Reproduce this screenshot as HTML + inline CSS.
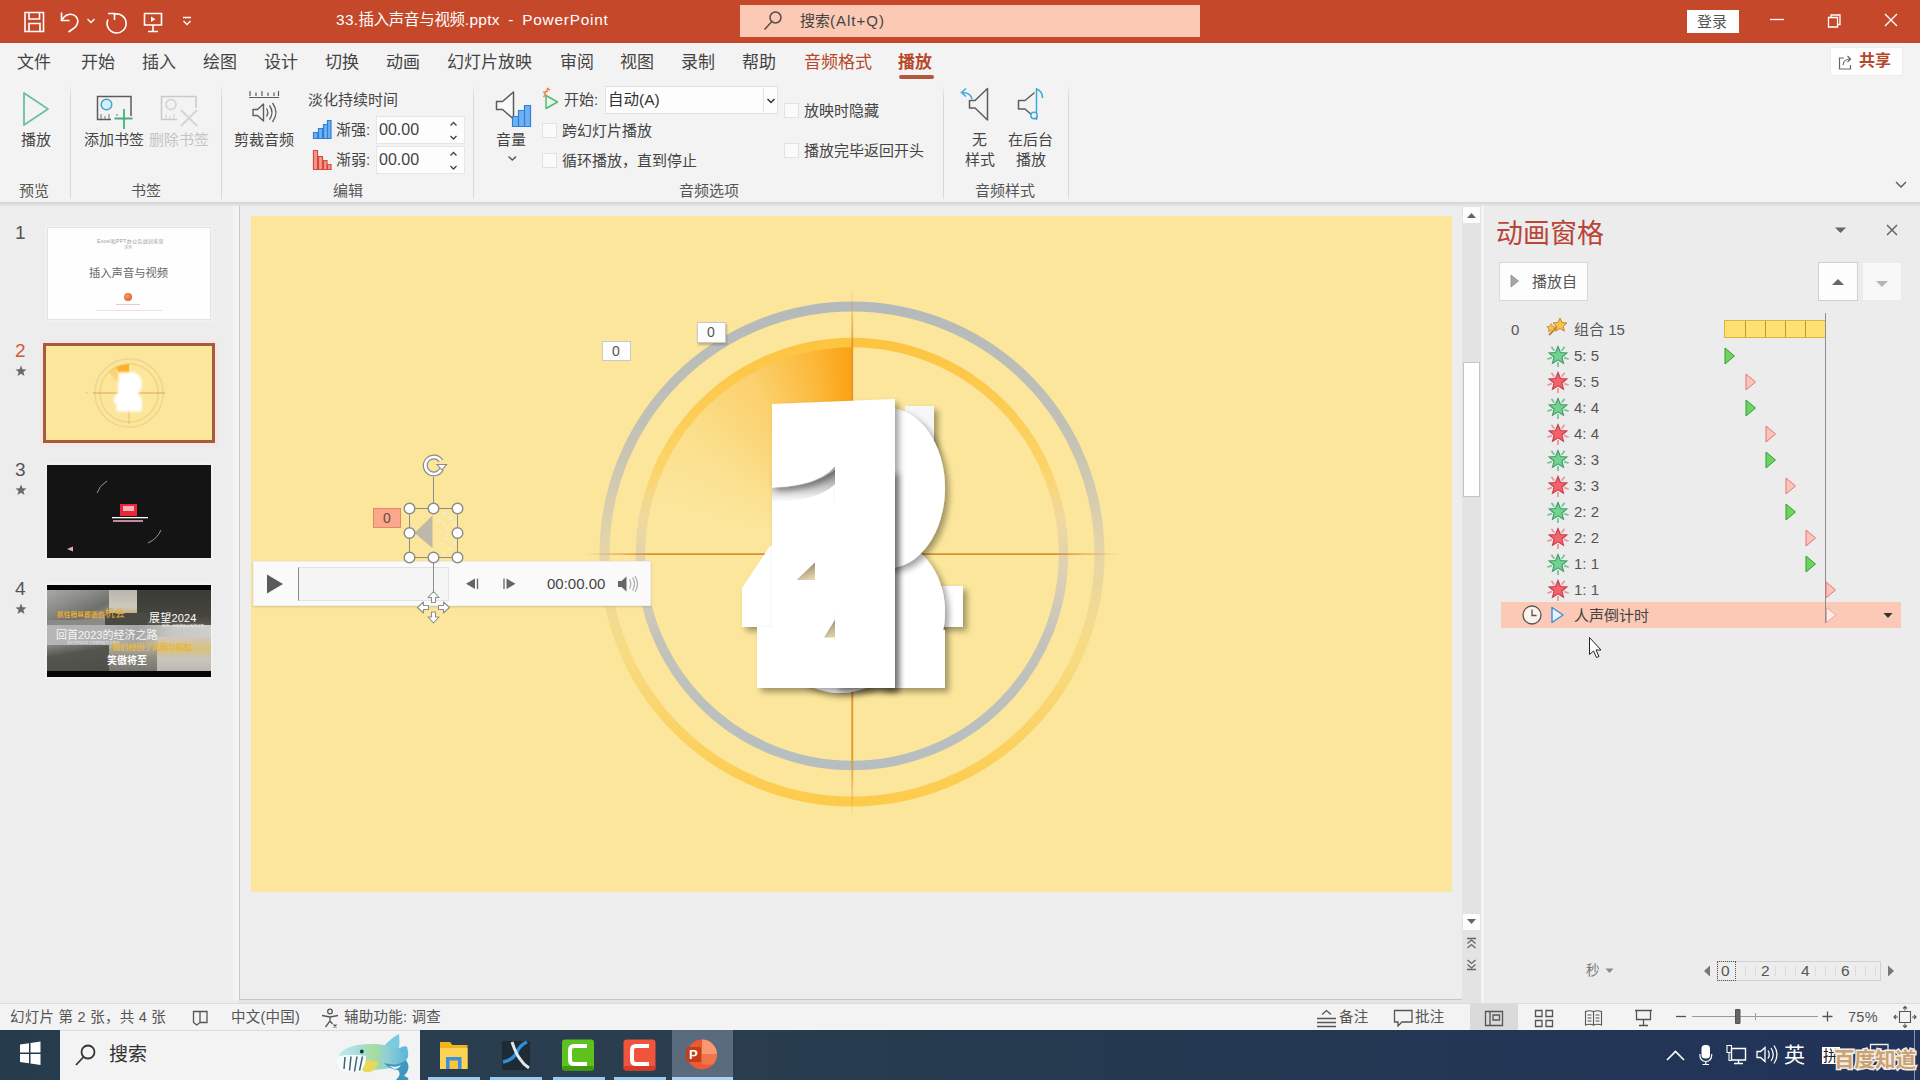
<!DOCTYPE html>
<html lang="zh-CN">
<head>
<meta charset="utf-8">
<title>33.插入声音与视频.pptx - PowerPoint</title>
<style>
*{box-sizing:border-box;margin:0;padding:0}
html,body{width:1920px;height:1080px;overflow:hidden;background:#e4e4e4}
body{font-family:"Liberation Sans","Noto Sans CJK SC",sans-serif;color:#444;position:relative;font-size:15px}
.abs{position:absolute}
.t{position:absolute;white-space:nowrap;line-height:1}
svg{position:absolute;overflow:visible}
/* title bar */
#titlebar{left:0;top:0;width:1920px;height:43px;background:#c5482a}
#search{left:740px;top:5px;width:460px;height:32px;background:#fbc9b4}
#tabs{left:0;top:43px;width:1920px;height:40px;background:#f3f3f3}
#ribbon{left:0;top:83px;width:1920px;height:119px;background:#f3f3f3}
#ribshadow{left:0;top:202px;width:1920px;height:4px;background:linear-gradient(#d4d4d4,#e6e6e6)}
.tab{font-size:17px;color:#444;top:54px}
.rl{font-size:15px;color:#444}
.grp{font-size:15px;color:#555;top:183px}
.sep{position:absolute;top:84px;width:1px;height:115px;background:linear-gradient(#f3f3f3,#d9d9d9 12%,#d9d9d9)}
.cb{position:absolute;width:15px;height:15px;background:#fafafa;border:1px solid #e2e2e2}
/* left pane */
#leftpane{left:0;top:206px;width:238px;height:797px;background:#ededed}
#divider{left:233px;top:206px;width:7px;height:794px;background:#f3f3f3;border-right:1px solid #c9c9c9}
#work{left:240px;top:206px;width:1222px;height:794px;background:#ededed;border-bottom:1px solid #c6c6c6}
#slide{left:251px;top:216px;width:1201px;height:676px;background:#fbe69b;overflow:hidden}
.num{font-size:19px;color:#555}
/* anim pane */
#apane{left:1484px;top:206px;width:436px;height:797px;background:#ececec}
.ai{font-size:15px;color:#555}
/* status */
#status{left:0;top:1003px;width:1920px;height:27px;background:#f3f3f3;border-top:1px solid #dcdcdc}
.st{font-size:14.5px;color:#555;top:1010px;letter-spacing:0.250px}
#taskbar{left:0;top:1030px;width:1920px;height:50px;background:#22334f}
</style>
</head>
<body>
<!-- TITLEBAR -->
<div id="titlebar" class="abs"></div>
<div id="search" class="abs"></div>
<div class="t" style="left:336px;top:11.500px;font-size:15.400px;color:#fff;letter-spacing:0.350px">33.<span style="letter-spacing:-0.200px">插入声音与视频</span>.pptx <span style="padding:0 3.800px">-</span> <span style="letter-spacing:0.750px">PowerPoint</span></div>
<div class="t" style="left:800px;top:13px;font-size:15px;color:#444">搜索<span style="letter-spacing:1px">(Alt+Q)</span></div>
<div class="abs" style="left:1687px;top:10px;width:52px;height:23px;background:#fff"></div>
<div class="t" style="left:1697px;top:14px;font-size:15px;color:#555">登录</div>
<svg style="left:0;top:0" width="1920" height="43" fill="none" stroke="#fff" stroke-width="1.6">
<!-- save -->
<path d="M25 12.5h18.500v19h-18.500z M29 12.500v6.500h10.500v-6.500 M29 31.500v-8h11v8" />
<!-- undo -->
<path d="M61.500 12.500v8h8 M62 20c3-6 10-7.500 14-3.500c3.500 4 1.500 9.500-2.500 12l-5 3.500" />
<path d="M87.500 19l3.500 3.500l3.500-3.500" stroke-width="1.400"/>
<!-- redo -->
<path d="M108 13.500h6.500v6.500 M113.500 14.500a9.500 9.500 0 1 1 -5.500 5" />
<!-- present -->
<path d="M144.500 13.500h17v11.500h-17z M153 25v6 M148 31.500h10" />
<path d="M151 16.500v5.500l4.500-2.750z" fill="#fff" stroke="none"/>
<!-- qat caret -->
<path d="M183 17.500h8 M183.500 21l3.500 3.500l3.500-3.500" stroke-width="1.400"/>
<!-- search glass -->
<circle cx="775.500" cy="17.500" r="5.500" stroke="#5a4a44" stroke-width="1.500"/>
<path d="M771.500 22l-7 7.500" stroke="#5a4a44" stroke-width="1.500"/>
<!-- window ctrls -->
<path d="M1770 19.500h14" stroke-width="1.300"/>
<path d="M1828.500 17.500h9v9.500h-9z M1831 17.500v-2.500h9v9.500h-2.500" stroke-width="1.300"/>
<path d="M1885 14l12 12 M1897 14l-12 12" stroke-width="1.400"/>
</svg>
<!-- TABS -->
<div id="tabs" class="abs"></div>
<div id="ribbon" class="abs"></div>
<div id="ribshadow" class="abs"></div>
<div class="t tab" style="left:17px">文件</div>
<div class="t tab" style="left:81px">开始</div>
<div class="t tab" style="left:142px">插入</div>
<div class="t tab" style="left:203px">绘图</div>
<div class="t tab" style="left:264px">设计</div>
<div class="t tab" style="left:325px">切换</div>
<div class="t tab" style="left:386px">动画</div>
<div class="t tab" style="left:447px">幻灯片放映</div>
<div class="t tab" style="left:560px">审阅</div>
<div class="t tab" style="left:620px">视图</div>
<div class="t tab" style="left:681px">录制</div>
<div class="t tab" style="left:742px">帮助</div>
<div class="t tab" style="left:804px;color:#b7472a">音频格式</div>
<div class="t tab" style="left:898px;color:#b7472a;font-weight:bold">播放</div>
<div class="abs" style="left:899px;top:75px;width:35px;height:4px;background:#b5573a;border-radius:2px"></div>
<div class="abs" style="left:1830px;top:47px;width:73px;height:29px;background:#fff;border:1px solid #ececec;border-radius:2px"></div>
<div class="t" style="left:1859px;top:53px;font-size:16px;font-weight:bold;color:#b7472a">共享</div>
<svg style="left:1837px;top:53px" width="18" height="18" fill="none" stroke="#666" stroke-width="1.200"><path d="M7 5h-4.500v11h11v-4 M6 12c0.500-4 3-6 7-6 M10.500 3l3 3l-3 3"/></svg>
<svg style="left:1894px;top:180px" width="14" height="10" fill="none" stroke="#555" stroke-width="1.300"><path d="M2 2l5 5l5-5"/></svg>


<div class="sep" style="left:70px"></div><div class="sep" style="left:221px"></div><div class="sep" style="left:473px"></div><div class="sep" style="left:943px"></div><div class="sep" style="left:1068px"></div>
<!-- play -->
<svg style="left:0;top:83px" width="1100" height="120" fill="none">
<path d="M24 10v32l24-16z" stroke="#6cc09c" stroke-width="1.800" stroke-linejoin="round"/>
<!-- add bookmark -->
<path d="M97.500 13.500h33.500v23h-33.500z" stroke="#5c5c5c" stroke-width="1.500"/>
<circle cx="106.500" cy="21.500" r="5.300" stroke="#4aa3c7" stroke-width="1.500" fill="#d4f0fb"/>
<path d="M101 36v-5 M105 36v-3 M109 36v-5 M113 36v-3 M117 36v-5 M121 36v-3" stroke="#777" stroke-width="1"/>
<path d="M111 33h26v12h-26z" fill="#f3f3f3" stroke="none"/>
<path d="M124 26v20 M114.500 35.500h18" stroke="#45b07c" stroke-width="1.800"/>
<!-- remove bookmark (disabled) -->
<path d="M161.500 13.500h34.500v23h-34.500z" stroke="#c9c9c9" stroke-width="1.500"/>
<circle cx="171" cy="21.500" r="5" stroke="#d2d2d2" stroke-width="1.500"/>
<path d="M166 36v-5 M170 36v-3 M174 36v-5 M178 36v-3" stroke="#d0d0d0" stroke-width="1"/>
<path d="M177 25h22v20h-22z" fill="#f3f3f3" stroke="none"/>
<path d="M181 27l16 16 M197 27l-16 16" stroke="#d4d4d4" stroke-width="1.800"/>
<!-- trim audio -->
<path d="M249 14.500h30 M250 8v5 M256 9.500v3.500 M262 8v5 M268 9.500v3.500 M274 9.500v3.500 M278.500 8v5" stroke="#5c5c5c" stroke-width="1.200"/>
<path d="M253 26.500h4.500l6-5.500v17l-6-5.500h-4.500z" stroke="#5c5c5c" stroke-width="1.400" stroke-linejoin="round"/>
<path d="M266.500 25.500q2.500 4 0 8 M269.500 22.500q5 7 0 14 M272.500 20q7 9.500 0 19" stroke="#5c5c5c" stroke-width="1.300"/>
<!-- fade in -->
<g stroke="#2f7fd6" stroke-width="1.200" fill="#6fb2f2"><path d="M313.500 49.500h4v6h-4z M318.500 45.500h4v10h-4z M323.500 41.500h4v14h-4z M327.500 37.500h3.500v18h-3.500z"/></g>
<!-- fade out -->
<g stroke="#d8493c" stroke-width="1.200" fill="#f39a8c"><path d="M313.500 67.500h4v19h-4z M318.500 73.500h4v13h-4z M323.500 77.500h3.500v9h-3.500z M327.500 81.500h3.500v5h-3.500z"/></g>
<!-- volume -->
<path d="M496.500 18.500h6l11-9.500v27l-11-9.500h-6z" stroke="#5c5c5c" stroke-width="1.500" fill="#fafafa" stroke-linejoin="round"/>
<g stroke="#2f7fd6" stroke-width="1.200" fill="#6fb2f2"><path d="M512.500 33.500h6v10h-6z M518.500 27.500h6v16h-6z M524.500 22.500h6v21h-6z"/></g>
<path d="M508.500 73.500l3.800 3.500l3.800-3.500" stroke="#555" stroke-width="1.400"/>
<!-- start icon -->
<path d="M546 12.500v13l11.500-6.500z" stroke="#58b87c" stroke-width="1.500" fill="#eaf7e6" stroke-linejoin="round"/>
<path d="M543.500 14l2-2.500l-1.500-2.500l3-0.500l0.500-3l2.500 1.500" stroke="#f08a3c" stroke-width="1.600"/>
<!-- no style -->
<path d="M969.500 17.500h5.500l12.500-12v31.500l-12.500-12h-5.500z" stroke="#5c5c5c" stroke-width="1.500" stroke-linejoin="round"/>
<path d="M972 16c-1-4.500-4.500-6.500-10-6.500 M966 5.500l-4.500 4l4.500 4" stroke="#3fa9dc" stroke-width="1.500"/>
<!-- bg play -->
<path d="M1018.500 17.500h6.500l11.500-9.500v28l-11.500-10h-6.500z" stroke="#5c5c5c" stroke-width="1.500" stroke-linejoin="round"/>
<path d="M1036.500 5v27" stroke="#f3f3f3" stroke-width="4"/>
<path d="M1036.500 5v25 M1036.500 6q6 2 6 9" stroke="#3fa9dc" stroke-width="1.500"/>
<circle cx="1034" cy="32.500" r="3.200" stroke="#3fa9dc" stroke-width="1.500" fill="#f3f3f3"/>
</svg>
<div class="t rl" style="left:21px;top:132px">播放</div>
<div class="t rl" style="left:84px;top:132px">添加书签</div>
<div class="t rl" style="left:149px;top:132px;color:#c4c4c4">删除书签</div>
<div class="t rl" style="left:234px;top:132px">剪裁音频</div>
<div class="t rl" style="left:308px;top:92px">淡化持续时间</div>
<div class="t rl" style="left:336px;top:122px">渐强:</div>
<div class="t rl" style="left:336px;top:152px">渐弱:</div>
<div class="abs" style="left:376px;top:116px;width:89px;height:28px;background:#fdfdfd;border:1px solid #e6e6e6"></div>
<div class="abs" style="left:376px;top:146px;width:89px;height:28px;background:#fdfdfd;border:1px solid #e6e6e6"></div>
<div class="t" style="left:379px;top:122px;font-size:16px;color:#444">00.00</div>
<div class="t" style="left:379px;top:152px;font-size:16px;color:#444">00.00</div>
<svg style="left:448px;top:118px" width="12" height="56" fill="none" stroke="#444" stroke-width="1.300"><path d="M2.500 7.500l3-3l3 3 M2.500 18l3 3l3-3 M2.500 37.500l3-3l3 3 M2.500 48l3 3l3-3"/></svg>
<div class="t rl" style="left:496px;top:132px">音量</div>
<div class="t rl" style="left:564px;top:92px">开始:</div>
<div class="abs" style="left:605px;top:86px;width:173px;height:28px;background:#fdfdfd;border:1px solid #e2e2e2"></div>
<div class="abs" style="left:763px;top:88px;width:1px;height:24px;background:#e4e4e4"></div>
<div class="t" style="left:608px;top:92px;font-size:15.500px;color:#333">自动(A)</div>
<svg style="left:765px;top:96px" width="12" height="10" fill="none" stroke="#333" stroke-width="1.500"><path d="M2.500 3l3.500 3.500l3.500-3.500"/></svg>
<div class="cb" style="left:542px;top:123px"></div>
<div class="cb" style="left:542px;top:153px"></div>
<div class="cb" style="left:784px;top:103px"></div>
<div class="cb" style="left:784px;top:143px"></div>
<div class="t rl" style="left:562px;top:123px">跨幻灯片播放</div>
<div class="t rl" style="left:562px;top:153px">循环播放，直到停止</div>
<div class="t rl" style="left:804px;top:103px">放映时隐藏</div>
<div class="t rl" style="left:804px;top:143px">播放完毕返回开头</div>
<div class="t rl" style="left:972px;top:132px">无</div>
<div class="t rl" style="left:965px;top:152px">样式</div>
<div class="t rl" style="left:1008px;top:132px">在后台</div>
<div class="t rl" style="left:1016px;top:152px">播放</div>
<div class="t grp" style="left:19px">预览</div>
<div class="t grp" style="left:131px">书签</div>
<div class="t grp" style="left:333px">编辑</div>
<div class="t grp" style="left:679px">音频选项</div>
<div class="t grp" style="left:975px">音频样式</div>

<!-- LEFT PANE -->
<div id="leftpane" class="abs"></div>
<div id="divider" class="abs"></div>
<div id="work" class="abs"></div>

<div class="t num" style="left:15px;top:223px">1</div>
<div class="t num" style="left:15px;top:341px;color:#d4573a">2</div>
<div class="t num" style="left:15px;top:460px">3</div>
<div class="t num" style="left:15px;top:579px">4</div>
<svg style="left:15px;top:365px" width="12" height="12" viewBox="0 0 12 12"><path d="M6 0.500l1.500 3.800l4 0.200l-3.100 2.600l1.100 4l-3.500-2.300l-3.500 2.300l1.100-4l-3.100-2.600l4-0.200z" fill="#6a6a6a"/></svg><svg style="left:15px;top:484px" width="12" height="12" viewBox="0 0 12 12"><path d="M6 0.500l1.500 3.800l4 0.200l-3.100 2.600l1.100 4l-3.500-2.300l-3.500 2.300l1.100-4l-3.100-2.600l4-0.200z" fill="#6a6a6a"/></svg><svg style="left:15px;top:603px" width="12" height="12" viewBox="0 0 12 12"><path d="M6 0.500l1.500 3.800l4 0.200l-3.100 2.600l1.100 4l-3.500-2.300l-3.500 2.300l1.100-4l-3.100-2.600l4-0.200z" fill="#6a6a6a"/></svg>
<div class="abs" style="left:45px;top:225px;width:168px;height:97px;background:#f1f1f1"></div>
<div class="abs" style="left:47px;top:227px;width:164px;height:93px;background:#fefefe;border:1px solid #e2e2e2"></div>
<div class="t" style="left:97px;top:239px;font-size:5px;color:#999;letter-spacing:0.300px">Excel和PPT办公实战训练营</div>
<div class="t" style="left:124px;top:246px;font-size:4px;color:#aaa">讲师</div>
<div class="t" style="left:89px;top:268px;font-size:11.300px;color:#666">插入声音与视频</div>
<div class="abs" style="left:124px;top:293px;width:8px;height:8px;border-radius:50%;background:radial-gradient(circle at 40% 40%,#f6a05a,#e2452f)"></div>
<div class="abs" style="left:116px;top:304px;width:24px;height:1px;background:#e9c9c0"></div>
<div class="abs" style="left:96px;top:310px;width:66px;height:1px;background:#e4e4e4"></div>

<div class="abs" style="left:40px;top:340px;width:178px;height:106px;background:#f5e3df;opacity:0.600"></div>
<div class="abs" style="left:43px;top:343px;width:172px;height:100px;background:#fbe69b;border:3px solid #a85a3c;overflow:hidden">
<svg style="left:0;top:0" width="166" height="94" viewBox="251 216 1201 676">
<circle cx="852" cy="554" r="247" fill="none" stroke="#ecd794" stroke-width="12"/>
<circle cx="852" cy="554" r="211" fill="none" stroke="#f2d684" stroke-width="12"/>
<path d="M852 346A208 208 0 0 0 760 368L852 554z" fill="#fbb22a"/>
<path d="M852 346A208 208 0 0 0 705 407L852 554z" fill="#fbb22a" opacity="0.350"/>
<path d="M590 554h524" stroke="#d9a850" stroke-width="8"/>
<path d="M852 420v360" stroke="#e6c46a" stroke-width="8"/>
<g filter="url(#tb)"><path d="M775 404h120v284h-135v-60h-18v-40l30-40z M895 412q50 10 50 75q0 50-30 75q30 20 30 50v75h-50z" fill="#fff"/></g>
<circle cx="545" cy="553" r="8" fill="#e8d07a"/>
<defs><filter id="tb" x="-30%" y="-30%" width="160%" height="160%"><feGaussianBlur stdDeviation="9"/></filter></defs>
</svg></div>

<div class="abs" style="left:45px;top:463px;width:168px;height:97px;background:#f1f1f1"></div>
<div class="abs" style="left:47px;top:465px;width:164px;height:93px;background:#141414;overflow:hidden">
<svg style="left:0;top:0" width="164" height="93" fill="none">
<path d="M50 28q2-7 10-12" stroke="#9a9a9a" stroke-width="1"/><path d="M101 78q9-4 13-13" stroke="#9a9a9a" stroke-width="1"/>
<rect x="73" y="39" width="17" height="12" fill="#e8283a"/>
<rect x="76" y="41" width="11" height="5" fill="#f7b0b4"/>
<rect x="65" y="52" width="36" height="1.300" fill="#fff"/>
<rect x="66" y="55" width="30" height="2" fill="#c88a98"/>
<path d="M26 81.500l-6 2.500l6 2.500z" fill="#e8a8b4"/>
</svg></div>

<div class="abs" style="left:45px;top:583px;width:168px;height:96px;background:#f1f1f1"></div>
<div class="abs" style="left:47px;top:585px;width:164px;height:92px;background:#050505;overflow:hidden">
<div class="abs" style="left:0;top:5px;width:164px;height:81px;background:#8b8b86"></div>
<div class="abs" style="left:0;top:5px;width:62px;height:30px;background:linear-gradient(155deg,#a9a8a4 0%,#8a8a86 40%,#6e6e6a 70%,#9b9b97 100%)"></div>
<div class="abs" style="left:62px;top:5px;width:30px;height:28px;background:linear-gradient(180deg,#b9b6ae,#cfc9bd 60%,#b7a25a)"></div>
<div class="abs" style="left:90px;top:5px;width:74px;height:36px;background:linear-gradient(180deg,#3c3c36,#45453e 70%,#5a5a54)"></div>
<div class="abs" style="left:58px;top:28px;width:42px;height:14px;background:#4a4a45"></div>
<div class="abs" style="left:0;top:40px;width:164px;height:22px;background:linear-gradient(90deg,#b6b6b6 0%,#b0b0b0 35%,#a5a5a5 55%,#c6c6c2 75%,#cfcfcb 100%)"></div>
<div class="abs" style="left:0;top:60px;width:62px;height:26px;background:linear-gradient(170deg,#8a8a84 0%,#55554f 35%,#4e4e49 100%)"></div>
<div class="abs" style="left:62px;top:60px;width:50px;height:26px;background:linear-gradient(180deg,#b9b4a0,#8c8c82 50%,#77776f)"></div>
<div class="abs" style="left:110px;top:52px;width:54px;height:34px;background:linear-gradient(180deg,#cfc8c0 0%,#d8c27a 35%,#c9c4bd 65%,#bdb8b4 100%)"></div>
<div class="t" style="left:10px;top:24px;font-size:6.500px;color:#e9ae30;font-weight:bold;letter-spacing:0.300px">抓住稍纵即逝的<span style="font-size:10px;font-weight:normal">机会</span></div>
<div class="t" style="left:102px;top:28px;font-size:11px;color:#fff;letter-spacing:0.200px">展望2024</div>
<div class="t" style="left:115px;top:39.500px;font-size:3.500px;color:#eee">新的一年新的起点新的征程</div>
<div class="t" style="left:9px;top:45px;font-size:11px;color:#f6f6f6">回首2023的经济之路</div>
<div class="t" style="left:20px;top:57px;font-size:3.500px;color:#e8e8e8">我们共同见证了市场的起伏与变化</div>
<div class="t" style="left:65px;top:58.500px;font-size:8px;color:#e9b53a;font-weight:bold">我们经历了风雨与彩虹</div>
<div class="t" style="left:60px;top:71px;font-size:10px;color:#fff;font-weight:bold">笑傲将至</div>
</div>
<!-- SLIDE -->
<div id="slide" class="abs">

<div class="abs" style="left:393px;top:130px;width:416px;height:416px;border-radius:50%;background:conic-gradient(from 0deg,rgba(252,166,20,0) 0deg,rgba(252,166,20,0) 285deg,rgba(252,170,30,0.100) 305deg,rgba(252,168,25,0.350) 330deg,rgba(252,166,20,0.700) 348deg,rgba(251,160,15,0.980) 360deg)"></div>
<svg style="left:0;top:0" width="1201" height="676" viewBox="251 216 1201 676">
<defs>
<linearGradient id="ga" x1="0" y1="0" x2="0" y2="1"><stop offset="0" stop-color="#b4babb"/><stop offset="0.250" stop-color="#c2c1b6"/><stop offset="0.500" stop-color="#e6d5a8"/><stop offset="0.680" stop-color="#f7dc86"/><stop offset="1" stop-color="#fdcb4c"/></linearGradient>
<linearGradient id="gb" x1="0" y1="0" x2="0" y2="1"><stop offset="0" stop-color="#fdc440"/><stop offset="0.300" stop-color="#fcd568"/><stop offset="0.420" stop-color="#efd9a0"/><stop offset="0.550" stop-color="#dcd0b4"/><stop offset="0.700" stop-color="#c4c3ba"/><stop offset="1" stop-color="#b6bec0"/></linearGradient>
<linearGradient id="gh" x1="0" y1="0" x2="1" y2="0"><stop offset="0" stop-color="#d68a2a" stop-opacity="0"/><stop offset="0.120" stop-color="#d68a2a" stop-opacity="0.900"/><stop offset="0.880" stop-color="#d68a2a" stop-opacity="0.900"/><stop offset="1" stop-color="#d68a2a" stop-opacity="0"/></linearGradient>
<linearGradient id="gv" x1="0" y1="0" x2="0" y2="1"><stop offset="0" stop-color="#e0942a" stop-opacity="0"/><stop offset="0.120" stop-color="#e0942a" stop-opacity="0.950"/><stop offset="0.880" stop-color="#e0942a" stop-opacity="0.950"/><stop offset="1" stop-color="#e0942a" stop-opacity="0"/></linearGradient>
<filter id="ds" x="-20%" y="-20%" width="150%" height="150%"><feGaussianBlur in="SourceAlpha" stdDeviation="3"/><feOffset dx="4" dy="4"/><feComponentTransfer><feFuncA type="linear" slope="0.360"/></feComponentTransfer><feMerge><feMergeNode/><feMergeNode in="SourceGraphic"/></feMerge></filter>
<linearGradient id="gf" x1="0" y1="0" x2="0" y2="1"><stop offset="0" stop-color="#000" stop-opacity="0.420"/><stop offset="0.400" stop-color="#000" stop-opacity="0.300"/><stop offset="1" stop-color="#000" stop-opacity="0"/></linearGradient>
<linearGradient id="gt" x1="0.300" y1="0" x2="0.700" y2="1"><stop offset="0" stop-color="#6e6450"/><stop offset="0.450" stop-color="#b3a582"/><stop offset="1" stop-color="#e4d6ac"/></linearGradient>
<filter id="ds1" x="-20%" y="-20%" width="150%" height="150%"><feGaussianBlur in="SourceAlpha" stdDeviation="3.200"/><feOffset dx="4" dy="5"/><feComponentTransfer><feFuncA type="linear" slope="0.550"/></feComponentTransfer><feMerge><feMergeNode/><feMergeNode in="SourceGraphic"/></feMerge></filter>
</defs>
<circle cx="852" cy="554" r="247.500" fill="none" stroke="url(#ga)" stroke-width="10"/>
<circle cx="852" cy="554" r="211.500" fill="none" stroke="url(#gb)" stroke-width="9.500"/>
<rect x="585" y="553.200" width="534" height="1.800" fill="url(#gh)"/>
<rect x="851.300" y="288" width="1.900" height="530" fill="url(#gv)"/>
<g fill="#fff">
<g filter="url(#ds)"><rect x="905" y="406" width="29" height="60" fill="#f6f6f6"/><ellipse cx="840" cy="645" rx="58" ry="48"/></g>
<g filter="url(#ds)"><path d="M770 546h70v81h-98v-39z M900 586h63v41h-63z"/></g>
<g filter="url(#ds)"><ellipse cx="888" cy="612" rx="57" ry="72"/><path d="M880 630h65v58h-65z"/></g>
<g filter="url(#ds)"><ellipse cx="888" cy="488" rx="57" ry="80"/></g>
<g filter="url(#ds)"><path d="M772 470h123v218h-138v-61h15z"/></g>
<path d="M815 562.500v17.500h-18.500z" fill="url(#gt)"/><path d="M837 616.500v21h-13z" fill="url(#gt)"/>
<path d="M772 488C802 488 824 480 838 467V481C826 495 802 502 772 502Z" fill="url(#gf)"/><g filter="url(#ds)"><path d="M772 404L895 399V688H835V466C824 479 802 487 772 487Z"/></g><rect x="826" y="502" width="18" height="112"/><rect x="826" y="640" width="18" height="48"/>
</g>
</svg>

</div>

<!-- anim tags -->
<div class="abs" style="left:602px;top:341px;width:29px;height:20px;background:#fdfdfd;border:1px solid #c9c9c9"></div>
<div class="t" style="left:612px;top:344px;font-size:14px;color:#555">0</div>
<div class="abs" style="left:697px;top:322px;width:29px;height:21px;background:#fdfdfd;border:1px solid #c9c9c9;box-shadow:1px 2px 2px rgba(120,110,80,0.450)"></div>
<div class="t" style="left:707px;top:325px;font-size:14px;color:#555">0</div>
<div class="abs" style="left:373px;top:508px;width:28px;height:20px;background:#f9a88b;border:1px solid #e88468"></div>
<div class="t" style="left:383px;top:511px;font-size:14px;color:#6a4a40">0</div>
<!-- media bar -->
<div class="abs" style="left:253px;top:561px;width:398px;height:45px;background:#fafafa;border:1px solid #efefef;box-shadow:0 1px 2px rgba(150,140,110,0.350)"></div>
<div class="abs" style="left:298px;top:567px;width:151px;height:34px;background:#f5f5f5;border:1px solid #e2e2e2;border-left:1px solid #8a8a8a"></div>
<div class="t" style="left:547px;top:576px;font-size:15px;color:#444">00:00.00</div>
<svg style="left:251px;top:440px" width="420" height="200" fill="none">
<!-- play -->
<path d="M16 134.500v19l16-9.500z" fill="#5a5a5a"/>
<!-- prev / next -->
<path d="M224 138.500v10.500l-9-5.250z" fill="#666"/><path d="M226.500 138.500v10.500" stroke="#666" stroke-width="1.300"/>
<path d="M255.500 138.500v10.500l9-5.250z" fill="#666"/><path d="M253 138.500v10.500" stroke="#666" stroke-width="1.300"/>
<!-- volume -->
<path d="M367 141h3.500l5-4.500v15l-5-4.500h-3.500z" fill="#666"/>
<path d="M378.500 139.500q2.500 4.500 0 9 M381.500 137.500q4 6.500 0 13 M384 136q5 8 0 16" stroke="#aaa" stroke-width="1.200"/>
<!-- speaker object -->
<path d="M163.500 93l18-17.500v32.500z" fill="#b7b3ab" opacity="0.900"/>
<path d="M187 80q8 4 10 13q-2 9-10 13" stroke="#f5edd0" stroke-width="2" stroke-dasharray="3 2.500"/>
<path d="M192 73q13 6 15 20q-2 14-15 20" stroke="#f5edd0" stroke-width="2" stroke-dasharray="4 3"/>
<!-- selection -->
<path d="M158.500 68.500h48v49h-48z" stroke="#8c8c8c" stroke-width="1"/>
<path d="M182.500 36v32 M182.500 117.500v36" stroke="#8c8c8c" stroke-width="1"/>
<g fill="#fff" stroke="#8a8a8a" stroke-width="1.400">
<circle cx="158.500" cy="68.500" r="5.300"/><circle cx="182.500" cy="68.500" r="5.300"/><circle cx="206.500" cy="68.500" r="5.300"/>
<circle cx="158.500" cy="93" r="5.300"/><circle cx="206.500" cy="93" r="5.300"/>
<circle cx="158.500" cy="117.500" r="5.300"/><circle cx="182.500" cy="117.500" r="5.300"/><circle cx="206.500" cy="117.500" r="5.300"/>
</g>
<!-- rotate handle -->
<circle cx="182.500" cy="25.500" r="11.500" fill="#fbe69b"/>
<path d="M190 21a8.500 8.500 0 1 0 0.500 8" stroke="#8a8a8a" stroke-width="5"/>
<path d="M190 21a8.500 8.500 0 1 0 0.500 8" stroke="#fff" stroke-width="2.600"/>
<path d="M186 24.500h9.500l-4.500 5.500z" fill="#fff" stroke="#8a8a8a" stroke-width="1.100"/>
<!-- move cursor -->
<g fill="#fff" stroke="#8e8e8e" stroke-width="1.100" stroke-linejoin="round">
<path d="M182.500 151.500l5.500 6h-3.500v5h-4v-5h-3.500z"/>
<path d="M182.500 183l5.500-6h-3.500v-5h-4v5h-3.500z"/>
<path d="M166.500 167.500l6-5.500v3.500h5v4h-5v3.500z"/>
<path d="M198.500 167.500l-6-5.500v3.500h-5v4h5v3.500z"/>
</g>
</svg>


<div class="abs" style="left:1462px;top:206px;width:19px;height:797px;background:#e3e3e3"></div>
<div class="abs" style="left:1481px;top:206px;width:3px;height:797px;background:#f4f4f4"></div>
<div class="abs" style="left:1463px;top:207px;width:17px;height:16px;background:#fdfdfd"></div>
<div class="abs" style="left:1463px;top:362px;width:17px;height:135px;background:#fefefe;border:1px solid #c4c4c4"></div>
<div class="abs" style="left:1463px;top:914px;width:17px;height:16px;background:#fdfdfd"></div>
<svg style="left:1462px;top:206px" width="19" height="797" fill="#666">
<path d="M5 12l4.500-5l4.500 5z"/><path d="M5 713l4.500 5l4.500-5z"/>
<g fill="none" stroke="#666" stroke-width="1.300"><path d="M5.500 737.500l4-3.500l4 3.500 M5.500 742l4-3.500l4 3.500 M5 732.500h9"/><path d="M5.500 756l4 3.500l4-3.500 M5.500 760.500l4 3.500l4-3.500 M5 765.500h9" transform="translate(0,-2)"/></g>
</svg>

<!-- ANIM PANE -->
<div id="apane" class="abs"></div>

<div class="t" style="left:1496px;top:220.500px;font-size:27px;color:#b9443a">动画窗格</div>
<svg style="left:1830px;top:220px" width="80" height="20" fill="none"><path d="M5 7.500l5.500 5.500l5.500-5.500z" fill="#666"/><path d="M57 5l10 10 M67 5l-10 10" stroke="#666" stroke-width="1.500"/></svg>
<div class="abs" style="left:1499px;top:262px;width:89px;height:39px;background:#fdfdfd;border:1px solid #d8d8d8"></div>
<svg style="left:1510px;top:274px" width="10" height="14"><path d="M1 1v12l7.500-6z" fill="#a8a8a8" stroke="#8a8a8a" stroke-width="0.800"/></svg>
<div class="t ai" style="left:1532px;top:274px">播放自</div>
<div class="abs" style="left:1818px;top:262px;width:40px;height:39px;background:#fdfdfd;border:1px solid #cfcfcf"></div>
<div class="abs" style="left:1862px;top:262px;width:40px;height:39px;background:#f8f8f8;border:1px solid #ebebeb"></div>
<svg style="left:1818px;top:262px" width="84" height="39"><path d="M14 23l6-6l6 6z" fill="#666"/><path d="M58 19l6 6l6-6z" fill="#b5b5b5"/></svg>
<div class="t ai" style="left:1511px;top:322px">0</div>
<div class="t ai" style="left:1574px;top:322px">组合 15</div>
<div class="abs" style="left:1724px;top:320px;width:102px;height:18px;background:#fce074;border:1px solid #d9b53a"></div>
<div class="abs" style="left:1745px;top:321px;width:1px;height:16px;background:#b99a2c"></div><div class="abs" style="left:1765px;top:321px;width:1px;height:16px;background:#b99a2c"></div><div class="abs" style="left:1785px;top:321px;width:1px;height:16px;background:#b99a2c"></div><div class="abs" style="left:1805px;top:321px;width:1px;height:16px;background:#b99a2c"></div>
<div class="abs" style="left:1501px;top:602px;width:400px;height:26px;background:#fcc9b6"></div>
<div class="abs" style="left:1825px;top:313px;width:1px;height:310px;background:#8e8e8e"></div>
<svg style="left:1484px;top:206px" width="436" height="480" fill="none">
<!-- combo icon -->
<g transform="translate(63,111)"><path d="M2 18l9-9" stroke="#b9863a" stroke-width="2"/><path d="M13 1l2 4.500l5 0.500l-3.800 3.300l1.200 4.800l-4.400-2.600l-4.400 2.600l1.200-4.800l-3.800-3.300l5-0.500z" fill="#f6c24a" stroke="#c8862a" stroke-width="1"/><path d="M4 17l2 3.500l3.500 0.500l-2.500 2.500l0.500 3.500l-3.500-2l-3.500 2l0.700-3.500l-2.600-2.500l3.500-0.500z" transform="translate(1,-7) scale(0.800)" fill="#f6c24a" stroke="#c8862a" stroke-width="1"/></g>
<g transform="translate(62.6,137.8) scale(1.14)"><path d="M13.233 6.050L15.760 2.572 M15.231 12.200L19.320 13.528 M10.000 16.000L10.000 20.300 M4.769 12.200L0.680 13.528 M6.767 6.050L4.240 2.572" stroke="#7bc49a" stroke-width="1.600"/><path d="M10.000 2.300 L12.116 7.588 L17.799 7.966 L13.424 11.612 L14.820 17.134 L10.000 14.100 L5.180 17.134 L6.576 11.612 L2.201 7.966 L7.884 7.588Z" fill="#72d391" stroke="#3f9e63" stroke-width="1"/></g><path d="M241 142v16l9.500-8z" fill="#6fd45c" stroke="#2f9e3a" stroke-width="1"/>
<g transform="translate(62.6,163.8) scale(1.14)"><path d="M13.233 6.050L15.760 2.572 M15.231 12.200L19.320 13.528 M10.000 16.000L10.000 20.300 M4.769 12.200L0.680 13.528 M6.767 6.050L4.240 2.572" stroke="#e89aa0" stroke-width="1.600"/><path d="M10.000 2.300 L12.116 7.588 L17.799 7.966 L13.424 11.612 L14.820 17.134 L10.000 14.100 L5.180 17.134 L6.576 11.612 L2.201 7.966 L7.884 7.588Z" fill="#f4626a" stroke="#c63d48" stroke-width="1"/></g><path d="M262 168v16l9.500-8z" fill="#fbc4b8" stroke="#e8727a" stroke-width="1"/>
<g transform="translate(62.6,189.8) scale(1.14)"><path d="M13.233 6.050L15.760 2.572 M15.231 12.200L19.320 13.528 M10.000 16.000L10.000 20.300 M4.769 12.200L0.680 13.528 M6.767 6.050L4.240 2.572" stroke="#7bc49a" stroke-width="1.600"/><path d="M10.000 2.300 L12.116 7.588 L17.799 7.966 L13.424 11.612 L14.820 17.134 L10.000 14.100 L5.180 17.134 L6.576 11.612 L2.201 7.966 L7.884 7.588Z" fill="#72d391" stroke="#3f9e63" stroke-width="1"/></g><path d="M262 194v16l9.500-8z" fill="#6fd45c" stroke="#2f9e3a" stroke-width="1"/>
<g transform="translate(62.6,215.8) scale(1.14)"><path d="M13.233 6.050L15.760 2.572 M15.231 12.200L19.320 13.528 M10.000 16.000L10.000 20.300 M4.769 12.200L0.680 13.528 M6.767 6.050L4.240 2.572" stroke="#e89aa0" stroke-width="1.600"/><path d="M10.000 2.300 L12.116 7.588 L17.799 7.966 L13.424 11.612 L14.820 17.134 L10.000 14.100 L5.180 17.134 L6.576 11.612 L2.201 7.966 L7.884 7.588Z" fill="#f4626a" stroke="#c63d48" stroke-width="1"/></g><path d="M282 220v16l9.500-8z" fill="#fbc4b8" stroke="#e8727a" stroke-width="1"/>
<g transform="translate(62.6,241.8) scale(1.14)"><path d="M13.233 6.050L15.760 2.572 M15.231 12.200L19.320 13.528 M10.000 16.000L10.000 20.300 M4.769 12.200L0.680 13.528 M6.767 6.050L4.240 2.572" stroke="#7bc49a" stroke-width="1.600"/><path d="M10.000 2.300 L12.116 7.588 L17.799 7.966 L13.424 11.612 L14.820 17.134 L10.000 14.100 L5.180 17.134 L6.576 11.612 L2.201 7.966 L7.884 7.588Z" fill="#72d391" stroke="#3f9e63" stroke-width="1"/></g><path d="M282 246v16l9.500-8z" fill="#6fd45c" stroke="#2f9e3a" stroke-width="1"/>
<g transform="translate(62.6,267.8) scale(1.14)"><path d="M13.233 6.050L15.760 2.572 M15.231 12.200L19.320 13.528 M10.000 16.000L10.000 20.300 M4.769 12.200L0.680 13.528 M6.767 6.050L4.240 2.572" stroke="#e89aa0" stroke-width="1.600"/><path d="M10.000 2.300 L12.116 7.588 L17.799 7.966 L13.424 11.612 L14.820 17.134 L10.000 14.100 L5.180 17.134 L6.576 11.612 L2.201 7.966 L7.884 7.588Z" fill="#f4626a" stroke="#c63d48" stroke-width="1"/></g><path d="M302 272v16l9.500-8z" fill="#fbc4b8" stroke="#e8727a" stroke-width="1"/>
<g transform="translate(62.6,293.8) scale(1.14)"><path d="M13.233 6.050L15.760 2.572 M15.231 12.200L19.320 13.528 M10.000 16.000L10.000 20.300 M4.769 12.200L0.680 13.528 M6.767 6.050L4.240 2.572" stroke="#7bc49a" stroke-width="1.600"/><path d="M10.000 2.300 L12.116 7.588 L17.799 7.966 L13.424 11.612 L14.820 17.134 L10.000 14.100 L5.180 17.134 L6.576 11.612 L2.201 7.966 L7.884 7.588Z" fill="#72d391" stroke="#3f9e63" stroke-width="1"/></g><path d="M302 298v16l9.500-8z" fill="#6fd45c" stroke="#2f9e3a" stroke-width="1"/>
<g transform="translate(62.6,319.8) scale(1.14)"><path d="M13.233 6.050L15.760 2.572 M15.231 12.200L19.320 13.528 M10.000 16.000L10.000 20.300 M4.769 12.200L0.680 13.528 M6.767 6.050L4.240 2.572" stroke="#e89aa0" stroke-width="1.600"/><path d="M10.000 2.300 L12.116 7.588 L17.799 7.966 L13.424 11.612 L14.820 17.134 L10.000 14.100 L5.180 17.134 L6.576 11.612 L2.201 7.966 L7.884 7.588Z" fill="#f4626a" stroke="#c63d48" stroke-width="1"/></g><path d="M322 324v16l9.500-8z" fill="#fbc4b8" stroke="#e8727a" stroke-width="1"/>
<g transform="translate(62.6,345.8) scale(1.14)"><path d="M13.233 6.050L15.760 2.572 M15.231 12.200L19.320 13.528 M10.000 16.000L10.000 20.300 M4.769 12.200L0.680 13.528 M6.767 6.050L4.240 2.572" stroke="#7bc49a" stroke-width="1.600"/><path d="M10.000 2.300 L12.116 7.588 L17.799 7.966 L13.424 11.612 L14.820 17.134 L10.000 14.100 L5.180 17.134 L6.576 11.612 L2.201 7.966 L7.884 7.588Z" fill="#72d391" stroke="#3f9e63" stroke-width="1"/></g><path d="M322 350v16l9.500-8z" fill="#6fd45c" stroke="#2f9e3a" stroke-width="1"/>
<g transform="translate(62.6,371.8) scale(1.14)"><path d="M13.233 6.050L15.760 2.572 M15.231 12.200L19.320 13.528 M10.000 16.000L10.000 20.300 M4.769 12.200L0.680 13.528 M6.767 6.050L4.240 2.572" stroke="#e89aa0" stroke-width="1.600"/><path d="M10.000 2.300 L12.116 7.588 L17.799 7.966 L13.424 11.612 L14.820 17.134 L10.000 14.100 L5.180 17.134 L6.576 11.612 L2.201 7.966 L7.884 7.588Z" fill="#f4626a" stroke="#c63d48" stroke-width="1"/></g><path d="M342 376v16l9.500-8z" fill="#fbc4b8" stroke="#e8727a" stroke-width="1"/>
<circle cx="48" cy="409" r="9" fill="#fdf3ee" stroke="#555" stroke-width="1.300"/><path d="M48 403.500v6h4.500" stroke="#555" stroke-width="1.300"/>
<path d="M68 401.500v15l11-7.500z" fill="#e8f2fb" stroke="#3b8ed8" stroke-width="1.400" stroke-linejoin="round"/>
<path d="M342.500 401.500v15l9.500-7.500z" fill="#fdece6" stroke="#e8a79a" stroke-width="1"/>
<path d="M399.500 407l4.500 5l4.500-5z" fill="#333"/>
<!-- cursor -->
<path d="M105.500 431.500v17l4-3.500l3 6.500l2.500-1l-3-6.500h5z" fill="#fff" stroke="#222" stroke-width="1" stroke-linejoin="round"/>
</svg>
<div class="t ai" style="left:1574px;top:608px;color:#444">人声倒计时</div>
<div class="t ai" style="left:1574px;top:348px">5: 5</div>
<div class="t ai" style="left:1574px;top:374px">5: 5</div>
<div class="t ai" style="left:1574px;top:400px">4: 4</div>
<div class="t ai" style="left:1574px;top:426px">4: 4</div>
<div class="t ai" style="left:1574px;top:452px">3: 3</div>
<div class="t ai" style="left:1574px;top:478px">3: 3</div>
<div class="t ai" style="left:1574px;top:504px">2: 2</div>
<div class="t ai" style="left:1574px;top:530px">2: 2</div>
<div class="t ai" style="left:1574px;top:556px">1: 1</div>
<div class="t ai" style="left:1574px;top:582px">1: 1</div>

<div class="t" style="left:1586px;top:964px;font-size:13.500px;color:#777">秒</div>
<svg style="left:1604px;top:967px" width="12" height="8"><path d="M1.500 1.500l4 4.500l4-4.500z" fill="#8a8a8a"/></svg>
<svg style="left:1700px;top:962px" width="200" height="20"><path d="M10 3.500v11l-6-5.500z" fill="#777"/><path d="M188 3.500v11l6-5.500z" fill="#777"/></svg>
<div class="abs" style="left:1717px;top:961px;width:164px;height:20px;background:#ededed;border:1px solid #cfcfcf"></div>
<div class="abs" style="left:1717px;top:961px;width:19px;height:20px;border:1px dotted #555"></div>
<div class="abs" style="left:1745px;top:966px;width:1px;height:10px;background:#dcdcdc"></div><div class="abs" style="left:1755px;top:966px;width:1px;height:10px;background:#dcdcdc"></div><div class="abs" style="left:1775px;top:966px;width:1px;height:10px;background:#dcdcdc"></div><div class="abs" style="left:1785px;top:966px;width:1px;height:10px;background:#dcdcdc"></div><div class="abs" style="left:1795px;top:966px;width:1px;height:10px;background:#dcdcdc"></div><div class="abs" style="left:1815px;top:966px;width:1px;height:10px;background:#dcdcdc"></div><div class="abs" style="left:1825px;top:966px;width:1px;height:10px;background:#dcdcdc"></div><div class="abs" style="left:1835px;top:966px;width:1px;height:10px;background:#dcdcdc"></div><div class="abs" style="left:1855px;top:966px;width:1px;height:10px;background:#dcdcdc"></div><div class="abs" style="left:1865px;top:966px;width:1px;height:10px;background:#dcdcdc"></div><div class="abs" style="left:1875px;top:966px;width:1px;height:10px;background:#dcdcdc"></div>
<div class="t" style="left:1721px;top:963px;font-size:15.500px;color:#555">0</div>
<div class="t" style="left:1761px;top:963px;font-size:15.500px;color:#555">2</div>
<div class="t" style="left:1801px;top:963px;font-size:15.500px;color:#555">4</div>
<div class="t" style="left:1841px;top:963px;font-size:15.500px;color:#555">6</div>

<!-- STATUS -->
<div id="status" class="abs"></div>

<div class="t st" style="left:10px">幻灯片 第 2 张，共 4 张</div>
<div class="t st" style="left:231px">中文(中国)</div>
<div class="t st" style="left:344px">辅助功能: 调查</div>
<div class="t st" style="left:1339px">备注</div>
<div class="t st" style="left:1415px">批注</div>
<div class="abs" style="left:1470px;top:1004px;width:48px;height:26px;background:#dadada"></div>
<div class="t st" style="left:1848px">75%</div>
<svg style="left:0;top:1003px" width="1920" height="27" fill="none" stroke="#555" stroke-width="1.300">
<!-- book -->
<path d="M193.500 8.500h6.500v11l-3.250 2.500l-3.250-2.500z M200 8.500h7v11h-7" />
<!-- accessibility -->
<circle cx="330" cy="8.500" r="2.300"/><path d="M322 12.500l8 1.500l8-1.500 M330 14v4l-4.500 6 M330 18l2.500 3"/><path d="M333.500 21.500l3 3 M336.500 21.500l-3 3" stroke-width="1.200"/>
<!-- notes -->
<path d="M1317 15.500h19 M1317 19.500h19 M1317 23.500h19 M1322 11.500l4.500-4l4.500 4" stroke="#555"/>
<!-- comment -->
<path d="M1394.500 7.500h17.500v11.500h-10l-4 4v-4h-3.500z"/>
<!-- normal view -->
<path d="M1485.500 8.500h17v14h-17z M1490 8.500v14 M1493 12h6.500v5h-6.500z"/>
<!-- sorter -->
<path d="M1535.500 7.500h6.500v6h-6.500z M1546 7.500h6.500v6h-6.500z M1535.500 17.500h6.500v6h-6.500z M1546 17.500h6.500v6h-6.500z"/>
<!-- reading -->
<path d="M1585.500 8.500q4-1.500 8 0v13.500q-4-1.500-8 0z M1593.500 8.500q4-1.500 8 0v13.500q-4-1.500-8 0z M1587.500 12h4 M1587.500 15h4 M1587.500 18h4 M1595.500 12h4 M1595.500 15h4 M1595.500 18h4" stroke-width="1.100"/>
<!-- slideshow -->
<path d="M1635 7.500h17 M1636.500 7.500v9h14v-9 M1643.500 16.500v6 M1639 22.500h9"/>
<!-- zoom -->
<path d="M1676 13.500h10" stroke="#555"/>
<path d="M1692 13.500h126" stroke="#9a9a9a" stroke-width="1"/>
<path d="M1755.500 10v7" stroke="#9a9a9a" stroke-width="1"/>
<path d="M1735.500 6.500h4.500v14h-4.500z" fill="#666" stroke="#555" stroke-width="1"/>
<path d="M1822.500 13.500h10 M1827.500 8.500v10" stroke="#555"/>
<!-- fit -->
<path d="M1899.500 8.500h11v11h-11z M1905 3.500v4 M1905 20.500v4 M1894 14h4 M1912 14h4 M1903 5.500l2-2l2 2 M1903 22.500l2 2l2-2 M1896 12l-2 2l2 2 M1914 12l2 2l-2 2" stroke-width="1.100"/>
</svg>

<div id="taskbar" class="abs"></div>

<div class="abs" style="left:0;top:1030px;width:1920px;height:50px;background:linear-gradient(90deg,#263c4c 0%,#2a3e4f 35%,#25394f 55%,#21335a 100%)"></div>
<div class="abs" style="left:60px;top:1030px;width:360px;height:50px;background:#f3f3f3;border-top:1px solid #dcdcdc"></div>
<div class="t" style="left:109px;top:1045px;font-size:19px;color:#333">搜索</div>
<div class="abs" style="left:672px;top:1030px;width:61px;height:50px;background:#596b7c"></div>
<div class="abs" style="left:428px;top:1077px;width:52px;height:3px;background:#9ccaf2"></div>
<div class="abs" style="left:490px;top:1077px;width:52px;height:3px;background:#9ccaf2"></div>
<div class="abs" style="left:553px;top:1077px;width:52px;height:3px;background:#9ccaf2"></div>
<div class="abs" style="left:614px;top:1077px;width:52px;height:3px;background:#9ccaf2"></div>
<div class="abs" style="left:672px;top:1077px;width:61px;height:3px;background:#a9d2f5"></div>
<svg style="left:0;top:1030px" width="1920" height="50" fill="none">
<!-- windows logo -->
<path d="M20 14.500l9-1.300v9.300h-9z M30.500 13l10-1.500v11h-10z M20 24h9v9.300l-9-1.300z M30.500 24h10v11l-10-1.500z" fill="#fff"/>
<!-- search icon -->
<circle cx="88" cy="22" r="6.500" stroke="#333" stroke-width="1.800"/><path d="M83.500 27l-7.500 8" stroke="#333" stroke-width="1.800"/>
<!-- shark -->
<g>
<defs><linearGradient id="sk" x1="0" y1="0" x2="1" y2="0"><stop offset="0" stop-color="#c4ecec"/><stop offset="0.300" stop-color="#a6dcdc"/><stop offset="0.520" stop-color="#a9dd9c"/><stop offset="0.700" stop-color="#8fd0d4"/><stop offset="1" stop-color="#5cb4d8"/></linearGradient></defs>
<path d="M383 18q6-9 16-14q1 8 0 15z" fill="#7ccbe2"/>
<path d="M338 28q2-10 20-13q22-3 38 3q8 3 12 9q-4 8-14 10q-18 5-38 2q-16-3-18-11z" fill="url(#sk)"/>
<path d="M398 19q6-4 9-2q2 5 1 11z" fill="#63b9da"/>
<path d="M366 30q8 0 12 3q-2 7-8 9q-6 1-8-2z" fill="#e9d95a"/>
<path d="M337 27q12-4 29-1q0 10-6 16q-12 2-20-3q-4-5-3-12z" fill="#f6fbfb"/>
<path d="M345 27l-1 12 M351 26.500l-1.500 14 M357 26.500l-2.500 15 M362.500 26.500l-3 14" stroke="#41607c" stroke-width="1.500"/>
<circle cx="361.800" cy="21.500" r="1.900" fill="#0d3b3a"/>
<path d="M384 33q14 4 22-3q6 8-2 16q6 2 4 4h-12q6-6 2-10q-8 0-14-7z" fill="#3f97bf"/>
<path d="M389 36q8 2 12-1q-2 4-7 4z" fill="#e8f6fa"/>
</g>
<!-- explorer -->
<path d="M440 12h10l2.500 3h15v24h-27.500z" fill="#f2b41e"/><path d="M440 18h27.500v21h-27.500z" fill="#fbd455"/><path d="M446 27h15.500v12h-15.500z" fill="#3f8ee0"/><path d="M449.500 30.500h8.500v8.500h-8.500z" fill="#f6c53a"/>
<!-- app2 -->
<path d="M502 11h28v29h-28z" fill="#1f2a33"/><path d="M503 32q10-2 14-10q3-7 10-10" stroke="#2f8fd8" stroke-width="3.500"/><path d="M512 12q4 12 8 17q3 5 9 9" stroke="#dfe8f0" stroke-width="3"/>
<!-- camtasia green -->
<rect x="562" y="9.500" width="32" height="31" rx="3" fill="#5ec21c"/><path d="M587 16h-13q-4 0-4 4v10q0 4 4 4h13" stroke="#fff" stroke-width="4"/><rect x="562" y="36" width="32" height="4.500" rx="2" fill="#3f9a10"/>
<!-- camtasia red -->
<rect x="623.500" y="9.500" width="32" height="31" rx="3" fill="#f0543c"/><path d="M649 16h-13q-4 0-4 4v10q0 4 4 4h13" stroke="#fff" stroke-width="4"/><rect x="623.500" y="36" width="32" height="4.500" rx="2" fill="#d83a28"/>
<!-- powerpoint -->
<circle cx="702" cy="24.500" r="15" fill="#ea5a33"/><path d="M702 9.500a15 15 0 0 1 15 15h-15z" fill="#f79a72"/><path d="M702 24.500h15a15 15 0 0 1 -4 10h-11z" fill="#f0754e"/>
<rect x="686" y="17" width="15" height="15" rx="1.500" fill="#c43e1c"/>
<!-- tray -->
<path d="M1667 30l8.500-8.500l8.500 8.500" stroke="#fff" stroke-width="1.600"/>
<rect x="1701.500" y="15" width="8.500" height="13.500" rx="3.500" fill="#fff"/><path d="M1699.800 24q0 7.500 6 7.500q6 0 6-7.500 M1705.800 31.500v2.500 M1702.500 34.500h6.500" stroke="#fff" stroke-width="1.200"/>
<path d="M1731.500 18.500h14v11.500h-14z M1734 33.500h9 M1738.500 30v3.500" stroke="#fff" stroke-width="1.400"/><path d="M1727 15.500h4.500v7h-4.500z M1729 22.500v8h2.500" stroke="#fff" stroke-width="1.100"/>
<path d="M1757 21.500h3.500l4.500-4v14l-4.500-4h-3.500z" stroke="#fff" stroke-width="1.300"/><path d="M1768 20.500q2.500 4 0 8 M1771 18q4.500 6.500 0 13 M1774 15.500q6 9 0 18" stroke="#fff" stroke-width="1.300"/>
<rect x="1822" y="27" width="18" height="17" fill="#fff" transform="translate(0,-10)"/>
<path d="M1870.500 14.500h17.500v14h-17.500z" stroke="#e8f0fa" stroke-width="1.300"/>
<path d="M1914.500 0v50" stroke="#8a96a8" stroke-width="1"/>
</svg>
<div class="t" style="left:689px;top:1048px;font-size:13px;font-weight:bold;color:#fff">P</div>
<div class="t" style="left:1784px;top:1044px;font-size:21px;color:#fff">英</div>
<div class="t" style="left:1823px;top:1048px;font-size:15px;color:#222">拼</div>
<div class="t" style="left:1834px;top:1050px;font-size:20.500px;font-weight:bold;color:#c9a274;-webkit-text-stroke:3px #f4ede4;paint-order:stroke fill;letter-spacing:0">百度知道</div>

</body>
</html>
